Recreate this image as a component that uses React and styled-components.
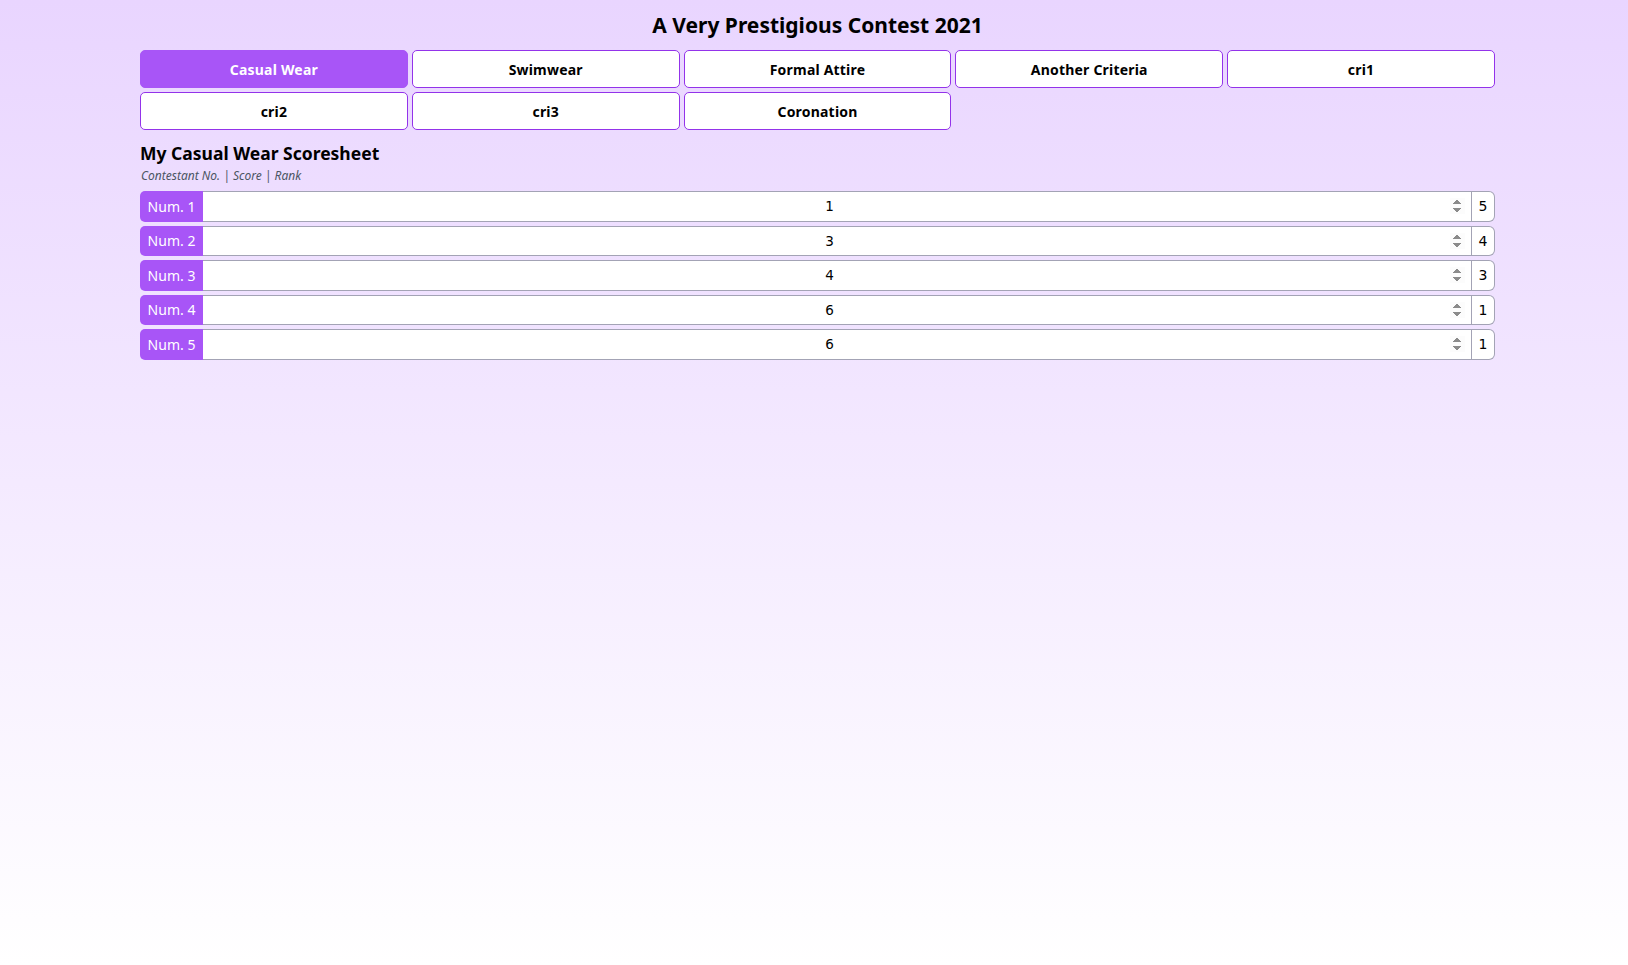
import React, { useState } from "react";
import styled, { createGlobalStyle, css } from "styled-components";

const GlobalStyle = createGlobalStyle`
  html, body {
    margin: 0;
    padding: 0;
  }
  body {
    min-height: 100vh;
    background: linear-gradient(to bottom, #e9d5ff 0%, #ffffff 100%);
    font-family: "Noto Sans", "Open Sans", sans-serif;
    color: #000;
  }
`;

const Page = styled.div`
  width: 1355px;
  margin-left: 140px;
`;

const Title = styled.h1`
  margin: 0;
  height: 50px;
  line-height: 50px;
  text-align: center;
  font-size: 21px;
  font-weight: 700;
`;

const Tabs = styled.div`
  display: grid;
  grid-template-columns: repeat(5, 1fr);
  gap: 4px;
`;

const Tab = styled.button`
  height: 38px;
  border: 1px solid #9333ea;
  border-radius: 5px;
  background: #fff;
  color: #000;
  font-family: "Noto Sans", sans-serif;
  font-size: 14px;
  font-weight: 700;
  letter-spacing: 0.2px;
  cursor: pointer;

  ${(p) =>
    p.active &&
    css`
      background: #a855f7;
      border-color: #a855f7;
      color: #fff;
    `}
`;

const Heading = styled.h2`
  margin: 11px 0 0;
  font-size: 17.5px;
  font-weight: 700;
  line-height: 24px;
`;

const Hint = styled.p`
  margin: 2px 0 0 1px;
  font-size: 12px;
  font-style: italic;
  color: #4b5563;
  line-height: 18px;
`;

const Rows = styled.div`
  display: flex;
  flex-direction: column;
  gap: 4px;
  margin-top: 6px;
`;

const Row = styled.div`
  display: flex;
  height: 30.5px;
`;

const Label = styled.span`
  width: 63px;
  flex: none;
  display: flex;
  align-items: center;
  justify-content: center;
  background: #a855f7;
  color: #fff;
  font-size: 14px;
  border-radius: 5px 0 0 5px;
`;

const ScoreInput = styled.input`
  flex: 1;
  min-width: 0;
  box-sizing: border-box;
  height: 100%;
  margin: 0;
  padding: 0 6px;
  border: 1px solid #a3a3b5;
  border-left: none;
  background: #fff;
  text-align: center;
  font-family: "DejaVu Sans", sans-serif;
  font-size: 13.5px;
  color: #000;
  outline: none;

  &::-webkit-inner-spin-button {
    opacity: 1;
  }
`;

const Rank = styled.span`
  width: 23px;
  flex: none;
  box-sizing: border-box;
  display: flex;
  align-items: center;
  justify-content: center;
  background: #fff;
  border: 1px solid #a3a3b5;
  border-left: none;
  border-radius: 0 6px 6px 0;
  font-family: "DejaVu Sans", sans-serif;
  font-size: 14px;
`;

const criteria = [
  "Casual Wear",
  "Swimwear",
  "Formal Attire",
  "Another Criteria",
  "cri1",
  "cri2",
  "cri3",
  "Coronation",
];

const initialScores = [1, 3, 4, 6, 6];

const rankOf = (scores, i) =>
  scores.filter((s) => s > scores[i]).length + 1;

export default function App() {
  const [active, setActive] = useState(0);
  const [scores, setScores] = useState(initialScores);

  const update = (i, v) => {
    const next = [...scores];
    next[i] = Number(v);
    setScores(next);
  };

  return (
    <>
      <GlobalStyle />
      <Page>
        <Title>A Very Prestigious Contest 2021</Title>
        <Tabs>
          {criteria.map((c, i) => (
            <Tab key={c} active={i === active} onClick={() => setActive(i)}>
              {c}
            </Tab>
          ))}
        </Tabs>
        <Heading>My {criteria[active]} Scoresheet</Heading>
        <Hint>Contestant No. | Score | Rank</Hint>
        <Rows>
          {scores.map((s, i) => (
            <Row key={i}>
              <Label>Num. {i + 1}</Label>
              <ScoreInput
                type="number"
                value={s}
                onChange={(e) => update(i, e.target.value)}
              />
              <Rank>{rankOf(scores, i)}</Rank>
            </Row>
          ))}
        </Rows>
      </Page>
    </>
  );
}
